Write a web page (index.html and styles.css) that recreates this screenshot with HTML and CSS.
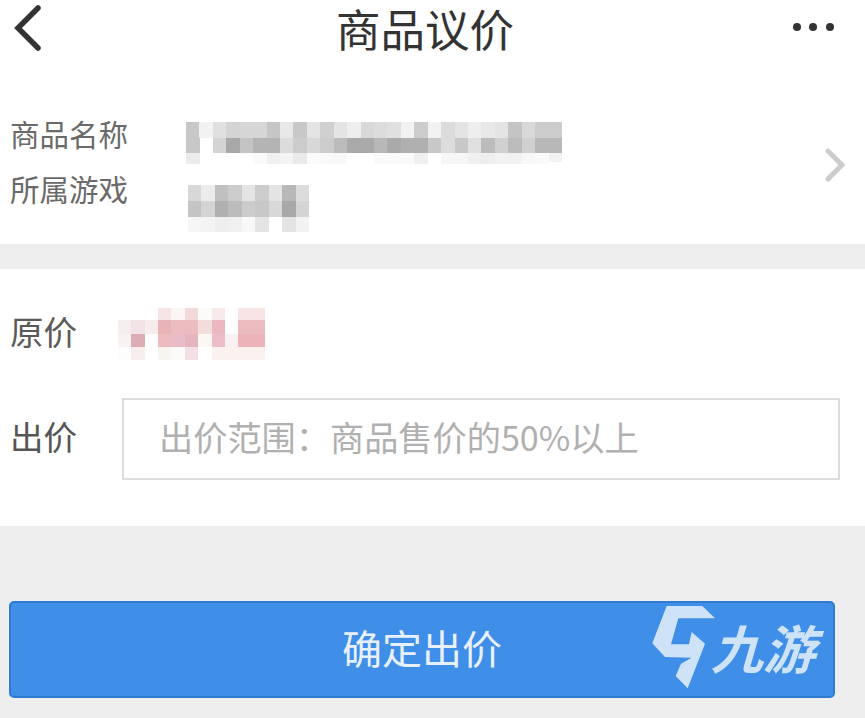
FILE: index.html
```html
<!DOCTYPE html>
<html lang="zh">
<head>
<meta charset="utf-8">
<title>商品议价</title>
<link rel="stylesheet" href="styles.css">
</head>
<body>
<main class="page">
  <header class="topbar">
    <svg class="back" viewBox="0 0 60 58"><polyline points="38,8 18,28 38,48"/></svg>
    <h1 class="title">商品议价</h1>
    <svg class="more" viewBox="0 0 60 10"><circle cx="9" cy="5" r="4"/><circle cx="25" cy="5" r="4"/><circle cx="42" cy="5" r="4"/></svg>
  </header>

  <section class="info">
    <div class="info-rows">
      <div class="info-row">
        <span class="info-label">商品名称</span>
        <svg class="mosaic mosaic-name" viewBox="0 0 28 42" preserveAspectRatio="none">
          <g class="row-a">
            <rect x="0" width="1.02" height="16" fill="#c8c8c8"/><rect x="1" width="1.02" height="16" fill="#f2f2f2"/><rect x="2" width="1.02" height="16" fill="#e0e0e0"/><rect x="3" width="1.02" height="16" fill="#d4d4d4"/><rect x="4" width="1.02" height="16" fill="#d6d6d6"/><rect x="5" width="1.02" height="16" fill="#d6d6d6"/><rect x="6" width="1.02" height="16" fill="#c6c6c6"/><rect x="7" width="1.02" height="16" fill="#e8e8e8"/><rect x="8" width="1.02" height="16" fill="#c8c8c8"/><rect x="9" width="1.02" height="16" fill="#e4e4e4"/><rect x="10" width="1.02" height="16" fill="#d0d0d0"/><rect x="11" width="1.02" height="16" fill="#e4e4e4"/><rect x="12" width="1.02" height="16" fill="#eeeeee"/><rect x="13" width="1.02" height="16" fill="#d8d8d8"/><rect x="14" width="1.02" height="16" fill="#dcdcdc"/><rect x="15" width="1.02" height="16" fill="#e0e0e0"/><rect x="16" width="1.02" height="16" fill="#f2f2f2"/><rect x="17" width="1.02" height="16" fill="#cccccc"/><rect x="18" width="1.02" height="16" fill="#f2f2f2"/><rect x="19" width="1.02" height="16" fill="#dcdcdc"/><rect x="20" width="1.02" height="16" fill="#e4e4e4"/><rect x="21" width="1.02" height="16" fill="#eeeeee"/><rect x="22" width="1.02" height="16" fill="#e8e8e8"/><rect x="23" width="1.02" height="16" fill="#e4e4e4"/><rect x="24" width="1.02" height="16" fill="#c4c4c4"/><rect x="25" width="1.02" height="16" fill="#d8d8d8"/><rect x="26" width="1.02" height="16" fill="#cccccc"/><rect x="27" width="1" height="16" fill="#cccccc"/>
          </g>
          <g class="row-b">
            <rect x="0" y="16" width="1.02" height="15" fill="#c8c8c8"/><rect x="2" y="16" width="1.02" height="15" fill="#d4d4d4"/><rect x="3" y="16" width="1.02" height="15" fill="#a8a8a8"/><rect x="4" y="16" width="1.02" height="15" fill="#c4c4c4"/><rect x="5" y="16" width="1.02" height="15" fill="#b4b4b4"/><rect x="6" y="16" width="1.02" height="15" fill="#b4b4b4"/><rect x="7" y="16" width="1.02" height="15" fill="#dcdcdc"/><rect x="8" y="16" width="1.02" height="15" fill="#cccccc"/><rect x="9" y="16" width="1.02" height="15" fill="#d8d8d8"/><rect x="10" y="16" width="1.02" height="15" fill="#cccccc"/><rect x="11" y="16" width="1.02" height="15" fill="#bcbcbc"/><rect x="12" y="16" width="1.02" height="15" fill="#aaaaaa"/><rect x="13" y="16" width="1.02" height="15" fill="#aaaaaa"/><rect x="14" y="16" width="1.02" height="15" fill="#b8b8b8"/><rect x="15" y="16" width="1.02" height="15" fill="#aaaaaa"/><rect x="16" y="16" width="1.02" height="15" fill="#b0b0b0"/><rect x="17" y="16" width="1.02" height="15" fill="#b0b0b0"/><rect x="18" y="16" width="1.02" height="15" fill="#c8c8c8"/><rect x="19" y="16" width="1.02" height="15" fill="#dcdcdc"/><rect x="20" y="16" width="1.02" height="15" fill="#c8c8c8"/><rect x="21" y="16" width="1.02" height="15" fill="#e0e0e0"/><rect x="22" y="16" width="1.02" height="15" fill="#bcbcbc"/><rect x="23" y="16" width="1.02" height="15" fill="#d0d0d0"/><rect x="24" y="16" width="1.02" height="15" fill="#bcbcbc"/><rect x="25" y="16" width="1.02" height="15" fill="#d0d0d0"/><rect x="26" y="16" width="1.02" height="15" fill="#b8b8b8"/><rect x="27" y="16" width="1" height="15" fill="#b8b8b8"/>
          </g>
          <g class="row-c">
            <rect x="0" y="31" width="1.02" height="11" fill="#ececec"/><rect x="5" y="31" width="1.02" height="11" fill="#fafafa"/><rect x="6" y="31" width="1.02" height="11" fill="#f0f0f0"/><rect x="7" y="31" width="1.02" height="11" fill="#f4f4f4"/><rect x="8" y="31" width="1.02" height="11" fill="#eaeaea"/><rect x="9" y="31" width="1.02" height="11" fill="#fbfbfb"/><rect x="10" y="31" width="1.02" height="11" fill="#fafafa"/><rect x="11" y="31" width="1.02" height="11" fill="#f8f8f8"/><rect x="14" y="31" width="1.02" height="11" fill="#fafafa"/><rect x="15" y="31" width="1.02" height="11" fill="#fafafa"/><rect x="16" y="31" width="1.02" height="11" fill="#fafafa"/><rect x="17" y="31" width="1.02" height="11" fill="#f0f0f0"/><rect x="19" y="31" width="1.02" height="11" fill="#f6f6f6"/><rect x="20" y="31" width="1.02" height="11" fill="#f6f6f6"/><rect x="21" y="31" width="1.02" height="11" fill="#f0f0f0"/><rect x="22" y="31" width="1.02" height="11" fill="#eeeeee"/><rect x="23" y="31" width="1.02" height="11" fill="#f2f2f2"/><rect x="24" y="31" width="1.02" height="11" fill="#f2f2f2"/><rect x="25" y="31" width="1.02" height="11" fill="#f8f8f8"/><rect x="26" y="31" width="1" height="11" fill="#fafafa"/><rect x="27" y="31" width="1" height="9" fill="#f2f2f2"/>
          </g>
        </svg>
      </div>
      <div class="info-row">
        <span class="info-label">所属游戏</span>
        <svg class="mosaic mosaic-game" viewBox="0 0 9 47" preserveAspectRatio="none">
          <rect x="0" width="1.02" height="16" fill="#d8d8d8"/><rect x="1" width="1.02" height="16" fill="#ececec"/><rect x="2" width="1.02" height="16" fill="#c0c0c0"/><rect x="3" width="1.02" height="16" fill="#cccccc"/><rect x="4" width="1.02" height="16" fill="#e4e4e4"/><rect x="5" width="1.02" height="16" fill="#cccccc"/><rect x="6" width="1.02" height="16" fill="#e4e4e4"/><rect x="7" width="1.02" height="16" fill="#b8b8b8"/><rect x="8" width="1" height="16" fill="#dcdcdc"/>
          <rect x="0" y="16" width="1.02" height="16" fill="#c4c4c4"/><rect x="1" y="16" width="1.02" height="16" fill="#d4d4d4"/><rect x="2" y="16" width="1.02" height="16" fill="#b0b0b0"/><rect x="3" y="16" width="1.02" height="16" fill="#bcbcbc"/><rect x="4" y="16" width="1.02" height="16" fill="#cccccc"/><rect x="5" y="16" width="1.02" height="16" fill="#c8c8c8"/><rect x="6" y="16" width="1.02" height="16" fill="#d8d8d8"/><rect x="7" y="16" width="1.02" height="16" fill="#a8a8a8"/><rect x="8" y="16" width="1" height="16" fill="#d4d4d4"/>
          <rect x="0" y="32" width="1.02" height="15" fill="#f6f6f6"/><rect x="1" y="32" width="1.02" height="15" fill="#f4f4f4"/><rect x="2" y="32" width="1.02" height="15" fill="#eeeeee"/><rect x="3" y="32" width="1.02" height="15" fill="#f0f0f0"/><rect x="4" y="32" width="1.02" height="15" fill="#f8f8f8"/><rect x="5" y="32" width="1.02" height="15" fill="#e4e4e4"/><rect x="7" y="32" width="1.02" height="15" fill="#e4e4e4"/><rect x="8" y="32" width="1" height="15" fill="#f2f2f2"/>
        </svg>
      </div>
    </div>
    <svg class="forward" viewBox="0 0 20 34"><polyline points="3,3 17,17 3,31"/></svg>
  </section>

  <section class="offer">
    <div class="offer-row">
      <span class="offer-label">原价</span>
      <svg class="mosaic mosaic-price" viewBox="0 0 11 52" preserveAspectRatio="none">
        <rect x="3" width="1.02" height="12" fill="#f8e4e4"/><rect x="4" width="1.02" height="12" fill="#fbf5f3"/><rect x="5" width="1.02" height="12" fill="#f2dada"/><rect x="6" width="1.02" height="12" fill="#fdfbfa"/><rect x="7" width="1.02" height="12" fill="#f8eaea"/><rect x="9" width="1.02" height="12" fill="#f8e4e4"/><rect x="10" width="1" height="12" fill="#f8e4e4"/>
        <rect x="0" y="12" width="1.02" height="14" fill="#f6eeee"/><rect x="1" y="12" width="1.02" height="14" fill="#f2e4e6"/><rect x="2" y="12" width="1.02" height="14" fill="#f6ecec"/><rect x="3" y="12" width="1.02" height="14" fill="#e8b4b8"/><rect x="4" y="12" width="1.02" height="14" fill="#ecbcc0"/><rect x="5" y="12" width="1.02" height="14" fill="#ecbcc0"/><rect x="6" y="12" width="1.02" height="14" fill="#f2dcdc"/><rect x="7" y="12" width="1.02" height="14" fill="#ecb8c0"/><rect x="9" y="12" width="1.02" height="14" fill="#ecbcc0"/><rect x="10" y="12" width="1" height="14" fill="#ecbcc0"/>
        <rect x="0" y="26" width="1.02" height="13" fill="#f8f2f2"/><rect x="1" y="26" width="1.02" height="13" fill="#dcaeb4"/><rect x="3" y="26" width="1.02" height="13" fill="#ecbcc0"/><rect x="4" y="26" width="1.02" height="13" fill="#e9bcc8"/><rect x="5" y="26" width="1.02" height="13" fill="#e6b4bc"/><rect x="6" y="26" width="1.02" height="13" fill="#fbf8f4"/><rect x="7" y="26" width="1.02" height="13" fill="#ecbcc8"/><rect x="8" y="26" width="1.02" height="13" fill="#f8f0f2"/><rect x="9" y="26" width="1.02" height="13" fill="#ecb4b8"/><rect x="10" y="26" width="1" height="13" fill="#ecb4b8"/>
        <rect x="0" y="39" width="1.02" height="13" fill="#fdfdfd"/><rect x="1" y="39" width="1.02" height="13" fill="#f8eeee"/><rect x="3" y="39" width="1.02" height="13" fill="#f8f4f0"/><rect x="4" y="39" width="1.02" height="13" fill="#fdfafa"/><rect x="5" y="39" width="1.02" height="13" fill="#f4e0e4"/><rect x="7" y="39" width="1.02" height="13" fill="#fbf2f0"/><rect x="8" y="39" width="1.02" height="13" fill="#fbf2f0"/><rect x="9" y="39" width="1.02" height="13" fill="#fbf2f0"/><rect x="10" y="39" width="1" height="13" fill="#fbf2f0"/>
      </svg>
    </div>
    <div class="bid-row">
      <span class="bid-label">出价</span>
      <div class="bid-input">出价范围：商品售价的50%以上</div>
    </div>
  </section>

  <div class="action">
    <button class="confirm" type="button">确定出价</button>
    <div class="watermark">
      <svg class="wm-logo" viewBox="0 0 240 270"><polygon points="65,15 172,15 210,52 100,52 78,130 132,130 140,93 180,128 128,262 92,225 108,188 140,170 60,168 22,127"/></svg>
      <span class="wm-text">九游</span>
    </div>
  </div>
</main>
</body>
</html>
```

FILE: styles.css
```css
* { box-sizing: border-box; }

html, body {
  margin: 0;
  padding: 0;
}

body {
  background: #eeeeee;
  font-family: "Noto Sans CJK SC", "Noto Sans", sans-serif;
}

.page {
  width: 865px;
  height: 718px;
  overflow: hidden;
  background: #eeeeee;
}

.topbar {
  height: 58px;
  background: #ffffff;
  display: flex;
  align-items: center;
  justify-content: space-between;
  padding-right: 17px;
}

.back {
  width: 60px;
  height: 58px;
  fill: none;
  stroke: #333333;
  stroke-width: 5.5;
  stroke-linecap: round;
  stroke-linejoin: miter;
}

.title {
  margin: 0 0 0 2px;
  padding-bottom: 2px;
  font-size: 44.5px;
  line-height: 52px;
  font-weight: 400;
  color: #333333;
}

.more {
  width: 60px;
  height: 10px;
  margin-bottom: 4px;
  fill: #333333;
}

.info {
  height: 186px;
  background: #ffffff;
  display: flex;
  justify-content: space-between;
  padding: 64px 20px 12px 10px;
}

.info-rows {
  display: flex;
  flex-direction: column;
  gap: 13px;
}

.info-row {
  display: flex;
  align-items: flex-start;
}

.info-label {
  width: 176px;
  font-size: 29.5px;
  line-height: 22px;
  color: #6a6a6a;
}

.mosaic {
  display: block;
  flex: none;
  shape-rendering: crispEdges;
}

.mosaic-name {
  width: 376px;
  height: 42px;
}

.mosaic-game {
  width: 121px;
  height: 47px;
  margin-top: 8px;
  margin-left: 2px;
}

.mosaic-price {
  width: 147px;
  height: 52px;
}

.forward {
  width: 20px;
  height: 34px;
  align-self: center;
  margin-bottom: 24px;
  fill: none;
  stroke: #cccccc;
  stroke-width: 5;
  stroke-linecap: round;
}

.offer {
  height: 257px;
  margin-top: 25px;
  background: #ffffff;
  padding: 39px 25px 0 10px;
}

.offer-row {
  display: flex;
  align-items: flex-start;
}

.offer-label {
  width: 108px;
  font-size: 33.5px;
  line-height: 46px;
  color: #5a5a5a;
}

.bid-row {
  display: flex;
  align-items: center;
  margin-top: 38px;
}

.bid-label {
  width: 112px;
  padding-bottom: 6px;
  font-size: 33.5px;
  line-height: 50px;
  color: #555555;
}

.bid-input {
  flex: 1;
  height: 82px;
  border: 2px solid #dddddd;
  padding-left: 35px;
  font-size: 34.2px;
  line-height: 72px;
  color: #b0b0b0;
  white-space: nowrap;
}

.action {
  position: relative;
  padding: 75px 30px 0 9px;
}

.confirm {
  display: block;
  width: 826px;
  height: 97px;
  border: 2px solid #2f7bd2;
  border-radius: 5px;
  background: #3f8ee8;
  color: #e8f1fb;
  font-family: inherit;
  font-size: 40px;
  padding: 0 0 6px 0;
}

.watermark {
  position: absolute;
  left: 645px;
  top: 75px;
  display: flex;
  pointer-events: none;
}

.wm-logo {
  width: 80px;
  height: 90px;
  fill: #cfe3f8;
}

.wm-text {
  position: absolute;
  left: 72px;
  top: 15px;
  font-size: 52px;
  line-height: 62px;
  font-weight: 700;
  color: #cfe3f8;
  transform: skewX(-16deg);
  white-space: nowrap;
}
```
